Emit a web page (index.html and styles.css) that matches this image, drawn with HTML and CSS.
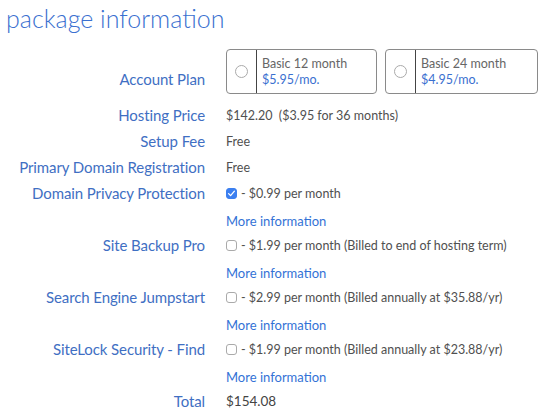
FILE: index.html
```html
<!DOCTYPE html>
<html>
<head>
<meta charset="utf-8">
<link rel="stylesheet" href="styles.css">
</head>
<body>
<div class="page">
  <h1 class="title">package information</h1>
  <div class="form">
    <div class="label plan-label">Account Plan</div>
    <div class="value plans">
      <label class="plan">
        <span class="plan-radio"><span class="radio"></span></span>
        <span class="plan-text"><span class="plan-name">Basic 12 month</span><span class="plan-price">$5.95/mo.</span></span>
      </label>
      <label class="plan">
        <span class="plan-radio"><span class="radio"></span></span>
        <span class="plan-text"><span class="plan-name">Basic 24 month</span><span class="plan-price">$4.95/mo.</span></span>
      </label>
    </div>

    <div class="label">Hosting Price</div>
    <div class="value">$142.20&nbsp;&nbsp;($3.95 for 36 months)</div>

    <div class="label">Setup Fee</div>
    <div class="value">Free</div>

    <div class="label">Primary Domain Registration</div>
    <div class="value">Free</div>

    <div class="label">Domain Privacy Protection</div>
    <div class="value"><span class="box checked"><svg viewBox="0 0 11 11" width="11" height="11"><path d="M2.6 5.6 L4.6 7.6 L8.4 3.2" fill="none" stroke="#fff" stroke-width="1.3" stroke-linecap="round" stroke-linejoin="round"/></svg></span>- $0.99 per month</div>
    <div class="label"></div>
    <div class="value more-row"><a class="more">More information</a></div>

    <div class="label">Site Backup Pro</div>
    <div class="value"><span class="box"></span>- $1.99 per month (Billed to end of hosting term)</div>
    <div class="label"></div>
    <div class="value more-row"><a class="more">More information</a></div>

    <div class="label">Search Engine Jumpstart</div>
    <div class="value"><span class="box"></span>- $2.99 per month (Billed annually at $35.88/yr)</div>
    <div class="label"></div>
    <div class="value more-row"><a class="more">More information</a></div>

    <div class="label">SiteLock Security - Find</div>
    <div class="value"><span class="box"></span>- $1.99 per month (Billed annually at $23.88/yr)</div>
    <div class="label"></div>
    <div class="value more-row"><a class="more">More information</a></div>

    <div class="label">Total</div>
    <div class="value total">$154.08</div>
  </div>
</div>
</body>
</html>
```

FILE: styles.css
```css
* { box-sizing: border-box; }
html, body { margin: 0; padding: 0; background: #fff; }
body { font-family: "Lato", "Liberation Sans", sans-serif; color: #555; }
.page { width: 538px; height: 414px; overflow: hidden; }
.title {
  margin: 0;
  padding: 3px 0 0 6px;
  font-size: 25px;
  font-weight: 300;
  line-height: 30px;
  color: #3a70d0;
}
.form {
  display: grid;
  grid-template-columns: 205px 1fr;
  grid-template-rows: 53px;
  column-gap: 21px;
  grid-auto-rows: 26px;
  margin-top: 16px;
}
.label {
  text-align: right;
  font-size: 15px;
  font-weight: 400;
  color: #3f6fc3;
  line-height: 26px;
  white-space: nowrap;
  letter-spacing: -0.1px;
}
.plan-label { padding-top: 20px; line-height: 20px; }
.value {
  display: flex;
  align-items: center;
  font-size: 12.5px;
  font-weight: 400;
  color: #505050;
  white-space: nowrap;
}
.more-row { padding-top: 3px; }
.plans { height: 45px; gap: 8px; }
.plan {
  display: flex;
  width: 151px;
  height: 45px;
  border: 1px solid #8a8a8a;
  border-radius: 4px;
}
.plan + .plan { width: 153px; }
.plan-radio {
  width: 30px;
  display: flex;
  align-items: center;
  justify-content: center;
  border-right: 1px solid #444;
}
.radio {
  width: 13px; height: 13px;
  border: 1px solid #aaa;
  border-radius: 50%;
  background: #fff;
}
.plan-text {
  display: flex;
  flex-direction: column;
  justify-content: center;
  padding-left: 5px;
  font-size: 12.5px;
  line-height: 16px;
}
.plan-name { color: #666; }
.plan-price { color: #3a70d0; }
.box {
  display: inline-flex;
  width: 11px; height: 11px;
  border: 1px solid #aaa;
  border-radius: 3px;
  margin-right: 4px;
  background: #fff;
}
.box.checked { background: #3b7ff0; border-color: #3b7ff0; }
.box svg { display: block; margin: -1px; }
.more { color: #3372d6; font-weight: 400; font-size: 13px; }
.total { font-size: 13.5px; color: #444; }
```
